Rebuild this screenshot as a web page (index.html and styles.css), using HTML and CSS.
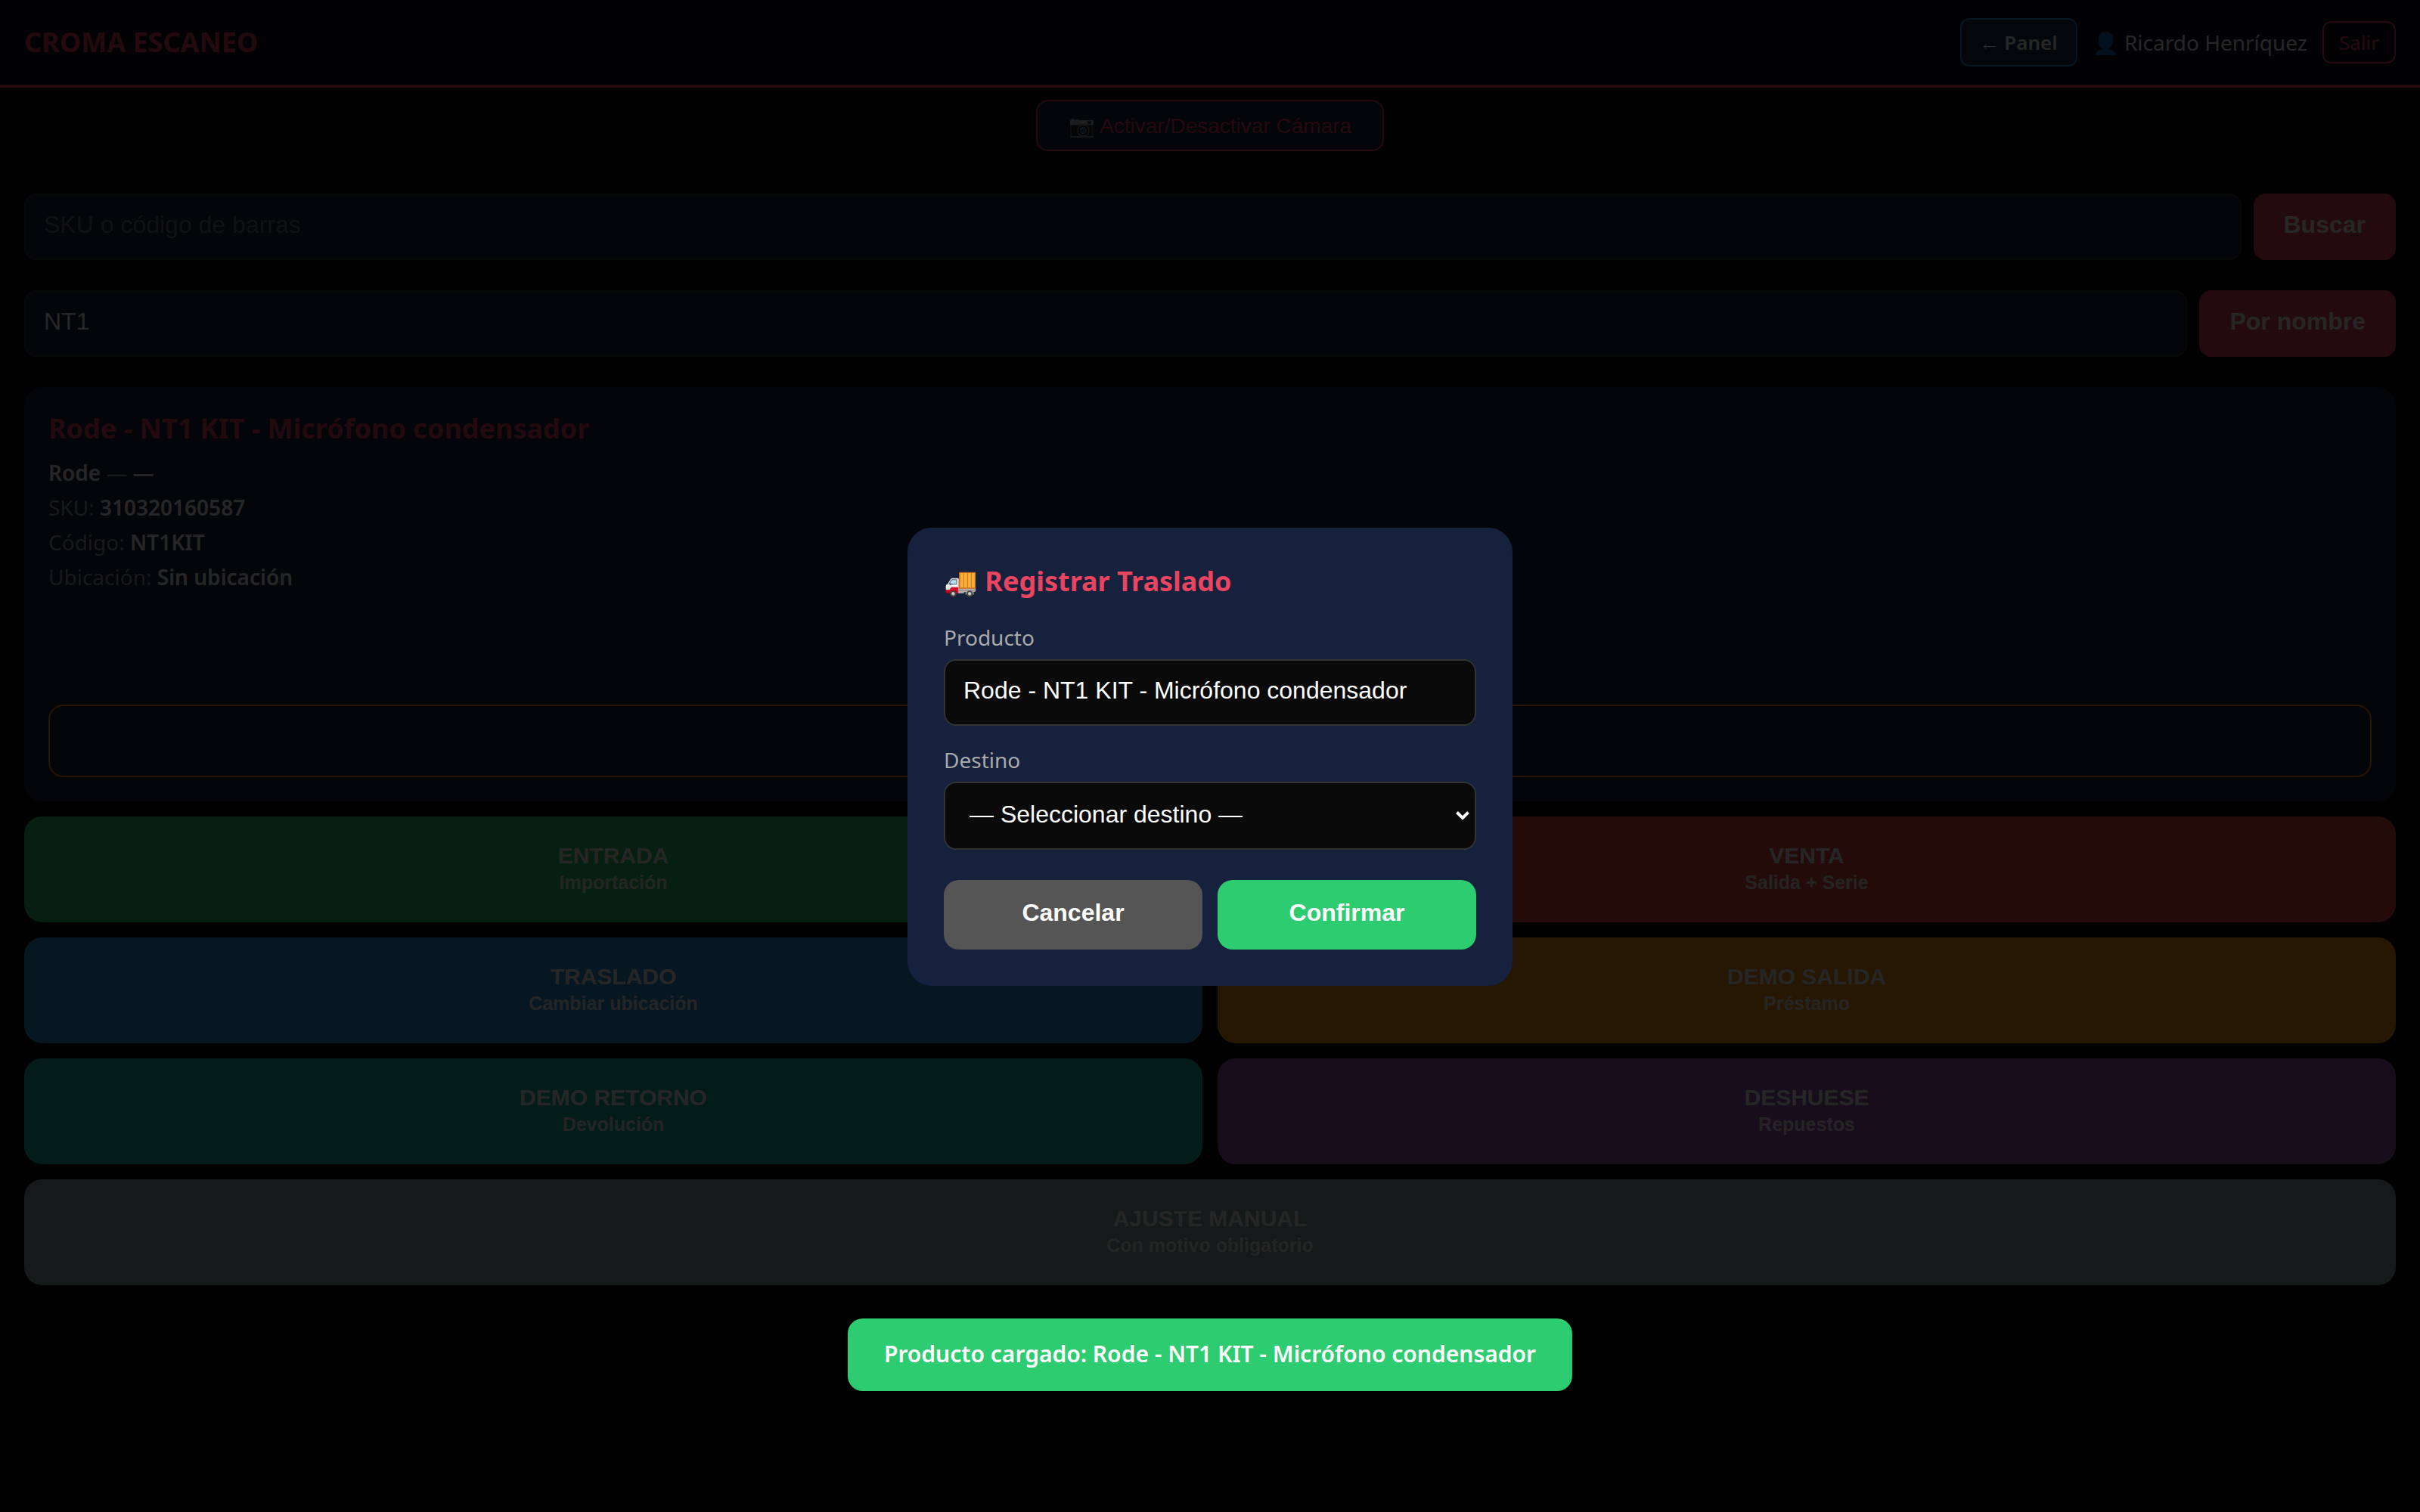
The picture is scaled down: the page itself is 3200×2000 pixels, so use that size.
FILE: index.html
```
<!DOCTYPE html>
<html lang="es">

<head>
  <meta charset="UTF-8">
  <meta name="viewport" content="width=device-width, initial-scale=1.0">
  <title>Croma Escaneo</title>
  <link rel="stylesheet" href="styles.css">
</head>

<body>
  <header class="header">
    <h1 class="logo">CROMA ESCANEO</h1>
    <div class="user-info">
      <a class="btn-panel">← Panel</a>
      <span class="user-name">👤 Ricardo Henríquez</span>
      <a class="btn-logout">Salir</a>
    </div>
  </header>

  <div class="camera-bar">
    <button class="btn-camera">📷 Activar/Desactivar Cámara</button>
  </div>

  <main class="content">
    <div class="search-row">
      <input class="search-input" type="text" placeholder="SKU o código de barras">
      <button class="btn-search">Buscar</button>
    </div>
    <div class="search-row">
      <input class="search-input" type="text" value="NT1">
      <button class="btn-search">Por nombre</button>
    </div>

    <section class="product-card">
      <h2 class="product-name">Rode - NT1 KIT - Micrófono condensador</h2>
      <p class="product-line"><strong>Rode</strong> — <strong>—</strong></p>
      <p class="product-line">SKU: <strong>310320160587</strong></p>
      <p class="product-line">Código: <strong>NT1KIT</strong></p>
      <p class="product-line">Ubicación: <strong>Sin ubicación</strong></p>
      <div class="stock-box"></div>
    </section>

    <div class="actions">
      <button class="action entrada">ENTRADA<small>Importación</small></button>
      <button class="action venta">VENTA<small>Salida + Serie</small></button>
      <button class="action traslado">TRASLADO<small>Cambiar ubicación</small></button>
      <button class="action demo-salida">DEMO SALIDA<small>Préstamo</small></button>
      <button class="action demo-retorno">DEMO RETORNO<small>Devolución</small></button>
      <button class="action deshuese">DESHUESE<small>Repuestos</small></button>
      <button class="action ajuste">AJUSTE MANUAL<small>Con motivo obligatorio</small></button>
    </div>
  </main>

  <div class="modal-overlay">
    <div class="modal">
      <h3 class="modal-title">🚚 Registrar Traslado</h3>
      <label class="modal-label" for="producto">Producto</label>
      <input class="modal-input" id="producto" type="text" value="Rode - NT1 KIT - Micrófono condensador" readonly>
      <label class="modal-label" for="destino">Destino</label>
      <div class="select-wrap">
        <select class="modal-input modal-select" id="destino">
          <option>— Seleccionar destino —</option>
        </select>
        <svg class="select-arrow" viewBox="0 0 20 14">
          <path d="M2.5 2.5 L10 10 L17.5 2.5" fill="none" stroke="#fff" stroke-width="4" />
        </svg>
      </div>
      <div class="modal-buttons">
        <button class="btn-modal btn-cancel">Cancelar</button>
        <button class="btn-modal btn-confirm">Confirmar</button>
      </div>
    </div>
  </div>

  <div class="toast">Producto cargado: Rode - NT1 KIT - Micrófono condensador</div>
</body>

</html>
```
FILE: styles.css
```
* {
  box-sizing: border-box;
  margin: 0;
  padding: 0;
}

body {
  min-height: 100vh;
  background: #0a0a0a;
  color: #fff;
  font-family: "Noto Sans", sans-serif;
  font-size: 32px;
}

button,
input,
select {
  font-family: "Liberation Sans", Arial, sans-serif;
}

.header {
  display: flex;
  justify-content: space-between;
  align-items: center;
  height: 116px;
  padding: 0 32px;
  background: #0f0f23;
  border-bottom: 4px solid #e94560;
}

.logo {
  font-size: 36px;
  line-height: 48px;
  color: #e94560;
}

.user-info {
  display: flex;
  align-items: center;
  gap: 20px;
}

.btn-panel {
  padding: 12px 24px;
  border: 2px solid #3498db;
  border-radius: 12px;
  background: #1a2f50;
  font-size: 26px;
  line-height: 36px;
  font-weight: 600;
}

.user-name {
  font-size: 28px;
  line-height: 38px;
}

.btn-logout {
  padding: 8px 20px;
  border: 2px solid #e94560;
  border-radius: 12px;
  color: #e94560;
  font-size: 26px;
  line-height: 36px;
}

.camera-bar {
  display: flex;
  justify-content: center;
  padding: 16px 32px 56px;
}

.btn-camera {
  height: 68px;
  padding: 0 41px;
  border: 2px solid #e94560;
  border-radius: 16px;
  background: #16213e;
  color: #e94560;
  font-size: 28px;
}

.content {
  padding: 0 32px;
}

.search-row {
  display: flex;
  gap: 16px;
  margin-bottom: 40px;
}

.search-input {
  flex: 1;
  height: 88px;
  padding: 0 24px 5px;
  border: 2px solid #333;
  border-radius: 16px;
  background: #16213e;
  color: #fff;
  font-size: 32px;
}

.btn-search {
  height: 88px;
  padding: 0 40px 5px;
  border: none;
  border-radius: 16px;
  background: #e94560;
  color: #fff;
  font-size: 32px;
  font-weight: bold;
}

.product-card {
  display: flex;
  flex-direction: column;
  height: 548px;
  padding: 31px 32px 32px;
  border-radius: 24px;
  background: #16213e;
}

.product-name {
  margin-bottom: 15px;
  color: #e94560;
  font-size: 36px;
  line-height: 48px;
}

.product-line {
  margin-bottom: 8px;
  color: #aaa;
  font-size: 28px;
  line-height: 38px;
}

.product-line strong {
  color: #fff;
  font-weight: 600;
}

.stock-box {
  height: 96px;
  margin-top: auto;
  border: 2px solid #f39c12;
  border-radius: 20px;
}

.actions {
  display: grid;
  grid-template-columns: 1fr 1fr;
  gap: 20px;
  margin-top: 20px;
}

.action {
  height: 140px;
  padding-bottom: 4px;
  border: none;
  border-radius: 24px;
  color: #fff;
  font-size: 30px;
  line-height: 34px;
  font-weight: bold;
}

.action small {
  display: block;
  margin-top: 3px;
  font-size: 25px;
  line-height: 30px;
  opacity: 0.9;
}

.entrada { background: #2ecc71; }
.venta { background: #e74c3c; }
.traslado { background: #3498db; }
.demo-salida { background: #f39c12; }
.demo-retorno { background: #1abc9c; }
.deshuese { background: #9b59b6; }

.ajuste {
  grid-column: 1 / -1;
  background: #95a5a6;
}

.modal-overlay {
  position: fixed;
  inset: 0;
  display: flex;
  justify-content: center;
  align-items: center;
  padding-top: 2px;
  background: rgba(0, 0, 0, 0.85);
}

.modal {
  width: 800px;
  height: 606px;
  padding: 47px 48px 48px;
  border-radius: 32px;
  background: #16213e;
}

.modal-title {
  margin-bottom: 31px;
  color: #e94560;
  font-size: 36px;
  line-height: 48px;
}

.modal-label {
  display: block;
  margin-bottom: 10px;
  color: #aaa;
  font-size: 28px;
  line-height: 38px;
}

.modal-input {
  display: block;
  width: 100%;
  height: 88px;
  margin-bottom: 26px;
  padding: 0 24px 5px;
  border: 2px solid #333;
  border-radius: 16px;
  background: #0a0a0a;
  color: #fff;
  font-size: 32px;
}

.select-wrap {
  position: relative;
}

.modal-select {
  appearance: none;
  height: 90px;
  margin-bottom: 40px;
  padding: 0 32px 4px;
}

.select-arrow {
  position: absolute;
  top: 38px;
  right: 8px;
  width: 20px;
  height: 14px;
}

.modal-buttons {
  display: flex;
  gap: 20px;
}

.btn-modal {
  flex: 1;
  height: 92px;
  padding-bottom: 6px;
  border: none;
  border-radius: 20px;
  color: #fff;
  font-size: 32px;
  font-weight: bold;
}

.btn-cancel {
  background: #555;
}

.btn-confirm {
  background: #2ecc71;
}

.toast {
  position: fixed;
  bottom: 160px;
  left: 50%;
  transform: translateX(-50%);
  height: 96px;
  padding: 0 48px;
  border-radius: 20px;
  background: #2ecc71;
  font-size: 30px;
  line-height: 94px;
  font-weight: 600;
  white-space: nowrap;
}
```
